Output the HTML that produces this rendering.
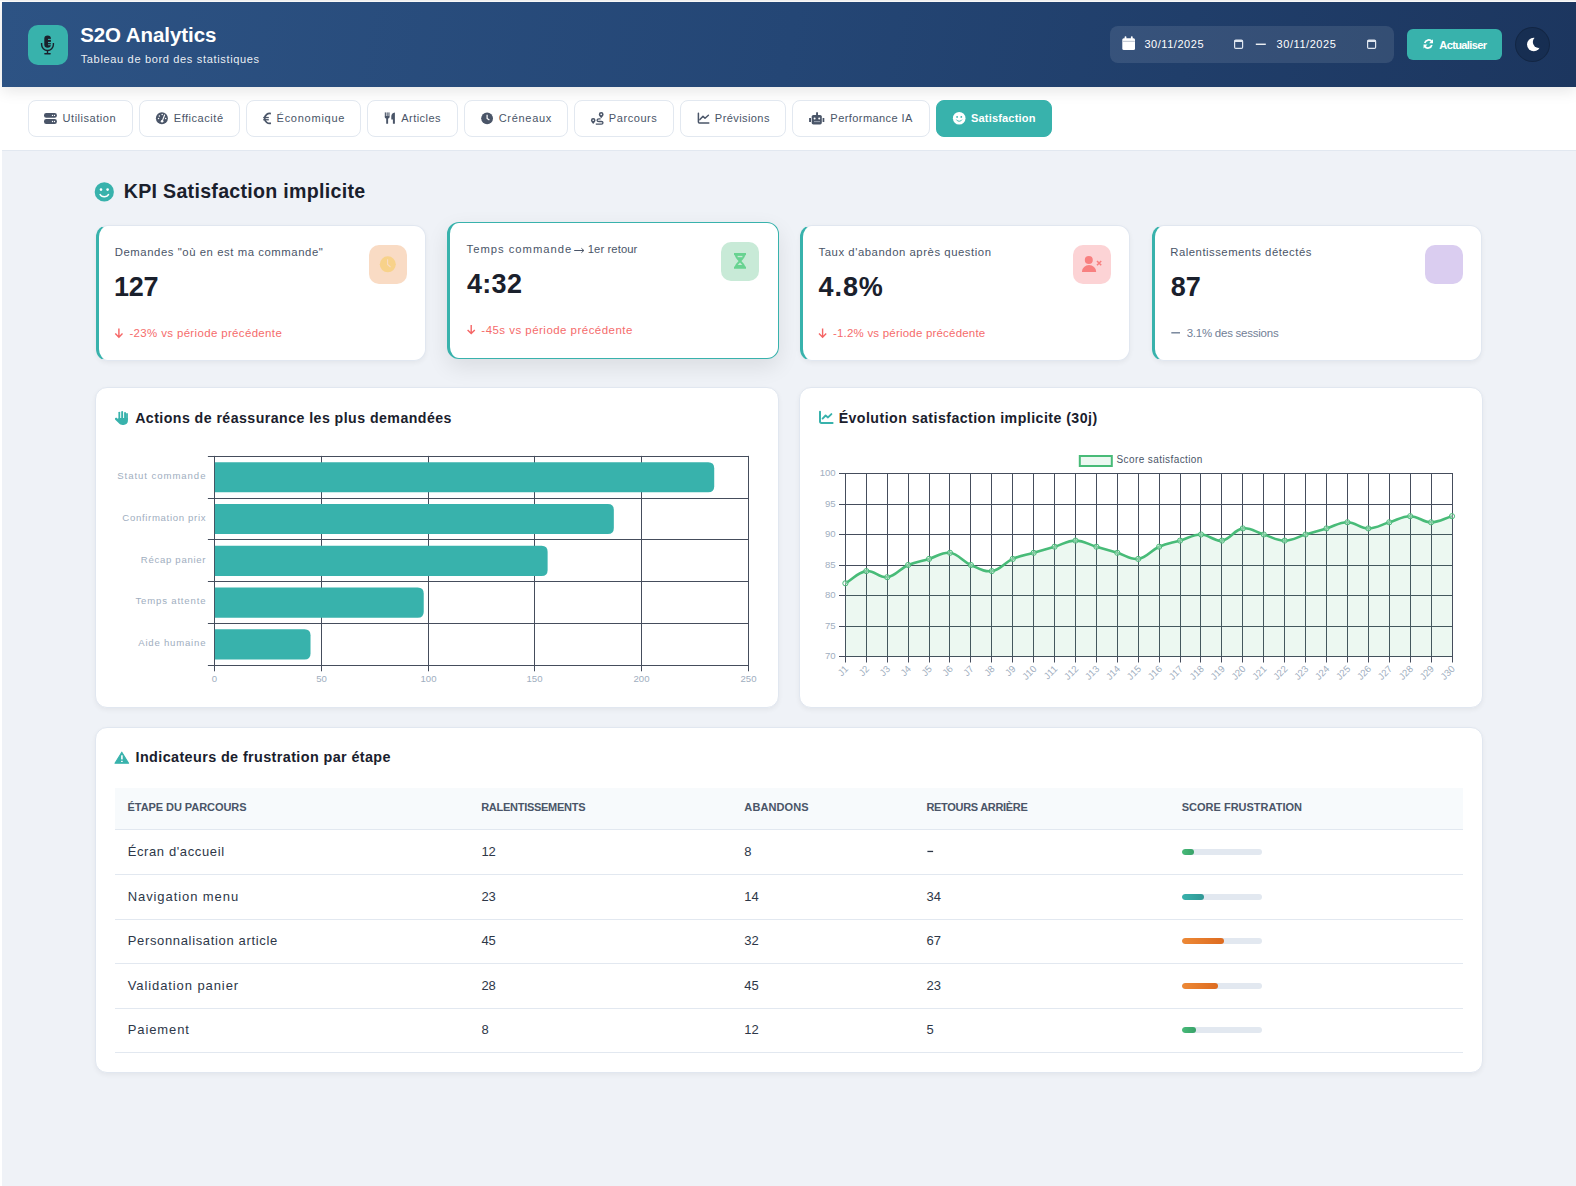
<!DOCTYPE html>
<html lang="fr">
<head>
<meta charset="utf-8">
<title>S2O Analytics - Satisfaction</title>
<style>
html,body{margin:0;padding:0;}
body{width:1576px;height:1186px;position:relative;overflow:hidden;background:#fff;font-family:"Liberation Sans",sans-serif;}
.abs{position:absolute;}
.tx{position:absolute;white-space:pre;}
.topline{position:absolute;left:0;top:0;width:1576px;height:1px;background:#f4f4f4;}
.page{position:absolute;left:2px;top:2px;width:1574px;height:1184px;background:#eff2f7;overflow:hidden;}
.nav{position:absolute;left:2px;top:87px;width:1574px;height:63px;background:#fff;border-bottom:1px solid #e2e8f0;box-sizing:border-box;height:64px;}
.header{position:absolute;left:2px;top:2px;width:1574px;height:85px;background:linear-gradient(100deg,#2d5384 0%,#244675 50%,#1c365f 100%);box-shadow:0 4px 14px rgba(0,0,0,0.10);}
.logo{position:absolute;left:28px;top:25px;width:40px;height:40px;border-radius:10px;background:#38b2ac;}
.datebox{position:absolute;left:1110px;top:26px;width:284px;height:37px;border-radius:8px;background:rgba(255,255,255,0.10);}
.btn{position:absolute;left:1407px;top:29px;width:95px;height:31px;border-radius:6px;background:#38b2ac;}
.moon{position:absolute;left:1515px;top:27px;width:35px;height:35px;border-radius:50%;background:rgba(10,25,50,0.3);box-sizing:border-box;border:1px solid rgba(0,0,0,0.18);}
.tab{position:absolute;top:100px;height:37px;box-sizing:border-box;border:1px solid #e2e8f0;border-radius:8px;background:#fff;}
.tab.act{background:#38b2ac;border-color:#38b2ac;}
.card{position:absolute;background:#fff;border-radius:12px;box-sizing:border-box;border:1px solid #e1e7f0;box-shadow:0 2px 5px rgba(0,0,0,0.05);}
.kpi{border-left:3px solid #38b2ac;}
.kpi.hov{border:1px solid #38b2ac;border-left:3px solid #38b2ac;box-shadow:0 8px 22px rgba(0,0,0,0.09);}
.ibox{position:absolute;width:38px;height:38.6px;border-radius:10px;}
.ax{font-family:"Liberation Sans",sans-serif;font-size:9.6px;fill:#a0aec0;}
.lg{font-family:"Liberation Sans",sans-serif;font-size:10px;fill:#4a5568;}
.thead{position:absolute;left:115px;top:788px;width:1348px;height:41px;background:#f7fafc;}
.rb{position:absolute;left:115px;width:1348px;height:1px;background:#e2e8f0;}
.trk{position:absolute;left:1182px;width:80px;height:6px;border-radius:3px;background:#e2e8f0;overflow:hidden;}
.trk div{height:6px;border-radius:3px;}
svg.ov{position:absolute;left:0;top:0;}
</style>
</head>
<body>
<div class="topline"></div>
<div class="page"></div>
<div class="nav"></div>
<div class="header"></div>
<div class="logo"></div>
<div class="datebox"></div>
<div class="btn"></div>
<div class="moon"></div>

<div class="tab" style="left:28px;width:105px"></div>
<div class="tab" style="left:139px;width:101px"></div>
<div class="tab" style="left:246px;width:115px"></div>
<div class="tab" style="left:367px;width:91px"></div>
<div class="tab" style="left:464px;width:104px"></div>
<div class="tab" style="left:574px;width:100px"></div>
<div class="tab" style="left:680px;width:106px"></div>
<div class="tab" style="left:792px;width:138px"></div>
<div class="tab act" style="left:936px;width:116px"></div>

<!-- KPI cards -->
<div class="card kpi" style="left:96px;top:225px;width:330px;height:136px"></div>
<div class="card kpi hov" style="left:447px;top:222.2px;width:331.8px;height:136.6px"></div>
<div class="card kpi" style="left:800px;top:225px;width:330px;height:136px"></div>
<div class="card kpi" style="left:1152px;top:225px;width:330px;height:136px"></div>
<div class="ibox" style="left:369px;top:245px;background:#f9dbc4"></div>
<div class="ibox" style="left:721px;top:242px;background:#c8ead7"></div>
<div class="ibox" style="left:1073px;top:245px;background:#fcd3d5"></div>
<div class="ibox" style="left:1425px;top:245px;background:#dacdf0"></div>

<!-- chart cards -->
<div class="card" style="left:95px;top:387px;width:684px;height:321px"></div>
<div class="card" style="left:799px;top:387px;width:684px;height:321px"></div>
<!-- table card -->
<div class="card" style="left:95px;top:727px;width:1388px;height:346px"></div>
<div class="thead"></div>
<div class="rb" style="top:829.0px"></div>
<div class="rb" style="top:874.0px"></div>
<div class="rb" style="top:918.6px"></div>
<div class="rb" style="top:963.2px"></div>
<div class="rb" style="top:1007.8px"></div>
<div class="rb" style="top:1052.4px"></div>
<div class="trk" style="top:849.0px"><div style="width:15%;background:linear-gradient(90deg,#48bb78,#38a169)"></div></div>
<div class="trk" style="top:893.6px"><div style="width:28%;background:linear-gradient(90deg,#38b2ac,#319795)"></div></div>
<div class="trk" style="top:938.2px"><div style="width:52%;background:linear-gradient(90deg,#ed8936,#dd6b20)"></div></div>
<div class="trk" style="top:982.8px"><div style="width:45%;background:linear-gradient(90deg,#ed8936,#dd6b20)"></div></div>
<div class="trk" style="top:1027.4px"><div style="width:18%;background:linear-gradient(90deg,#48bb78,#38a169)"></div></div>

<svg class="ov" width="1576" height="1186" viewBox="0 0 1576 1186">
<line x1="839" y1="473.50" x2="1452.50" y2="473.50" stroke="#454d5c" stroke-width="1"/>
<line x1="839" y1="504.50" x2="1452.50" y2="504.50" stroke="#454d5c" stroke-width="1"/>
<line x1="839" y1="534.50" x2="1452.50" y2="534.50" stroke="#454d5c" stroke-width="1"/>
<line x1="839" y1="565.50" x2="1452.50" y2="565.50" stroke="#454d5c" stroke-width="1"/>
<line x1="839" y1="595.50" x2="1452.50" y2="595.50" stroke="#454d5c" stroke-width="1"/>
<line x1="839" y1="626.50" x2="1452.50" y2="626.50" stroke="#454d5c" stroke-width="1"/>
<line x1="839" y1="656.50" x2="1452.50" y2="656.50" stroke="#454d5c" stroke-width="1"/>
<line x1="845.50" y1="473.00" x2="845.50" y2="662.5" stroke="#454d5c" stroke-width="1"/>
<line x1="866.50" y1="473.00" x2="866.50" y2="662.5" stroke="#454d5c" stroke-width="1"/>
<line x1="887.50" y1="473.00" x2="887.50" y2="662.5" stroke="#454d5c" stroke-width="1"/>
<line x1="908.50" y1="473.00" x2="908.50" y2="662.5" stroke="#454d5c" stroke-width="1"/>
<line x1="929.50" y1="473.00" x2="929.50" y2="662.5" stroke="#454d5c" stroke-width="1"/>
<line x1="949.50" y1="473.00" x2="949.50" y2="662.5" stroke="#454d5c" stroke-width="1"/>
<line x1="970.50" y1="473.00" x2="970.50" y2="662.5" stroke="#454d5c" stroke-width="1"/>
<line x1="991.50" y1="473.00" x2="991.50" y2="662.5" stroke="#454d5c" stroke-width="1"/>
<line x1="1012.50" y1="473.00" x2="1012.50" y2="662.5" stroke="#454d5c" stroke-width="1"/>
<line x1="1033.50" y1="473.00" x2="1033.50" y2="662.5" stroke="#454d5c" stroke-width="1"/>
<line x1="1054.50" y1="473.00" x2="1054.50" y2="662.5" stroke="#454d5c" stroke-width="1"/>
<line x1="1075.50" y1="473.00" x2="1075.50" y2="662.5" stroke="#454d5c" stroke-width="1"/>
<line x1="1096.50" y1="473.00" x2="1096.50" y2="662.5" stroke="#454d5c" stroke-width="1"/>
<line x1="1117.50" y1="473.00" x2="1117.50" y2="662.5" stroke="#454d5c" stroke-width="1"/>
<line x1="1138.50" y1="473.00" x2="1138.50" y2="662.5" stroke="#454d5c" stroke-width="1"/>
<line x1="1159.50" y1="473.00" x2="1159.50" y2="662.5" stroke="#454d5c" stroke-width="1"/>
<line x1="1180.50" y1="473.00" x2="1180.50" y2="662.5" stroke="#454d5c" stroke-width="1"/>
<line x1="1200.50" y1="473.00" x2="1200.50" y2="662.5" stroke="#454d5c" stroke-width="1"/>
<line x1="1221.50" y1="473.00" x2="1221.50" y2="662.5" stroke="#454d5c" stroke-width="1"/>
<line x1="1242.50" y1="473.00" x2="1242.50" y2="662.5" stroke="#454d5c" stroke-width="1"/>
<line x1="1263.50" y1="473.00" x2="1263.50" y2="662.5" stroke="#454d5c" stroke-width="1"/>
<line x1="1284.50" y1="473.00" x2="1284.50" y2="662.5" stroke="#454d5c" stroke-width="1"/>
<line x1="1305.50" y1="473.00" x2="1305.50" y2="662.5" stroke="#454d5c" stroke-width="1"/>
<line x1="1326.50" y1="473.00" x2="1326.50" y2="662.5" stroke="#454d5c" stroke-width="1"/>
<line x1="1347.50" y1="473.00" x2="1347.50" y2="662.5" stroke="#454d5c" stroke-width="1"/>
<line x1="1368.50" y1="473.00" x2="1368.50" y2="662.5" stroke="#454d5c" stroke-width="1"/>
<line x1="1389.50" y1="473.00" x2="1389.50" y2="662.5" stroke="#454d5c" stroke-width="1"/>
<line x1="1410.50" y1="473.00" x2="1410.50" y2="662.5" stroke="#454d5c" stroke-width="1"/>
<line x1="1431.50" y1="473.00" x2="1431.50" y2="662.5" stroke="#454d5c" stroke-width="1"/>
<line x1="1452.50" y1="473.00" x2="1452.50" y2="662.5" stroke="#454d5c" stroke-width="1"/>
<path d="M845.40,583.30 C853.77,578.42 857.51,572.38 866.32,571.10 C874.24,569.94 879.31,578.36 887.23,577.20 C896.04,575.92 899.34,568.85 908.15,565.00 C916.08,561.53 920.70,561.34 929.07,558.90 C937.44,556.46 942.06,551.64 949.99,552.80 C958.79,554.08 962.10,561.15 970.90,565.00 C978.83,568.47 983.90,572.26 991.82,571.10 C1000.63,569.82 1003.93,562.75 1012.74,558.90 C1020.66,555.43 1025.29,555.24 1033.66,552.80 C1042.02,550.36 1046.21,549.14 1054.57,546.70 C1062.94,544.26 1067.12,540.60 1075.49,540.60 C1083.86,540.60 1088.04,544.26 1096.41,546.70 C1104.77,549.14 1108.96,550.36 1117.32,552.80 C1125.69,555.24 1130.32,560.06 1138.24,558.90 C1147.05,557.62 1150.35,550.55 1159.16,546.70 C1167.08,543.23 1171.71,543.04 1180.08,540.60 C1188.44,538.16 1192.63,534.50 1200.99,534.50 C1209.36,534.50 1213.98,541.76 1221.91,540.60 C1230.72,539.32 1234.02,529.68 1242.83,528.40 C1250.75,527.24 1255.38,532.06 1263.74,534.50 C1272.11,536.94 1276.30,540.60 1284.66,540.60 C1293.03,540.60 1297.21,536.94 1305.58,534.50 C1313.95,532.06 1318.13,530.84 1326.50,528.40 C1334.86,525.96 1339.05,522.30 1347.41,522.30 C1355.78,522.30 1359.96,528.40 1368.33,528.40 C1376.70,528.40 1380.88,524.74 1389.25,522.30 C1397.62,519.86 1401.80,516.20 1410.17,516.20 C1418.53,516.20 1422.72,522.30 1431.08,522.30 C1439.45,522.30 1443.63,518.64 1452.00,516.20 L1452.00,656.50 L845.40,656.50 Z" fill="rgba(72,187,120,0.1)" stroke="none"/>
<path d="M845.40,583.30 C853.77,578.42 857.51,572.38 866.32,571.10 C874.24,569.94 879.31,578.36 887.23,577.20 C896.04,575.92 899.34,568.85 908.15,565.00 C916.08,561.53 920.70,561.34 929.07,558.90 C937.44,556.46 942.06,551.64 949.99,552.80 C958.79,554.08 962.10,561.15 970.90,565.00 C978.83,568.47 983.90,572.26 991.82,571.10 C1000.63,569.82 1003.93,562.75 1012.74,558.90 C1020.66,555.43 1025.29,555.24 1033.66,552.80 C1042.02,550.36 1046.21,549.14 1054.57,546.70 C1062.94,544.26 1067.12,540.60 1075.49,540.60 C1083.86,540.60 1088.04,544.26 1096.41,546.70 C1104.77,549.14 1108.96,550.36 1117.32,552.80 C1125.69,555.24 1130.32,560.06 1138.24,558.90 C1147.05,557.62 1150.35,550.55 1159.16,546.70 C1167.08,543.23 1171.71,543.04 1180.08,540.60 C1188.44,538.16 1192.63,534.50 1200.99,534.50 C1209.36,534.50 1213.98,541.76 1221.91,540.60 C1230.72,539.32 1234.02,529.68 1242.83,528.40 C1250.75,527.24 1255.38,532.06 1263.74,534.50 C1272.11,536.94 1276.30,540.60 1284.66,540.60 C1293.03,540.60 1297.21,536.94 1305.58,534.50 C1313.95,532.06 1318.13,530.84 1326.50,528.40 C1334.86,525.96 1339.05,522.30 1347.41,522.30 C1355.78,522.30 1359.96,528.40 1368.33,528.40 C1376.70,528.40 1380.88,524.74 1389.25,522.30 C1397.62,519.86 1401.80,516.20 1410.17,516.20 C1418.53,516.20 1422.72,522.30 1431.08,522.30 C1439.45,522.30 1443.63,518.64 1452.00,516.20" fill="none" stroke="#48bb78" stroke-width="2.6" stroke-linejoin="round"/>
<circle cx="845.40" cy="583.30" r="2.6" fill="rgba(255,255,255,0.3)" stroke="#48bb78" stroke-width="1"/>
<circle cx="866.32" cy="571.10" r="2.6" fill="rgba(255,255,255,0.3)" stroke="#48bb78" stroke-width="1"/>
<circle cx="887.23" cy="577.20" r="2.6" fill="rgba(255,255,255,0.3)" stroke="#48bb78" stroke-width="1"/>
<circle cx="908.15" cy="565.00" r="2.6" fill="rgba(255,255,255,0.3)" stroke="#48bb78" stroke-width="1"/>
<circle cx="929.07" cy="558.90" r="2.6" fill="rgba(255,255,255,0.3)" stroke="#48bb78" stroke-width="1"/>
<circle cx="949.99" cy="552.80" r="2.6" fill="rgba(255,255,255,0.3)" stroke="#48bb78" stroke-width="1"/>
<circle cx="970.90" cy="565.00" r="2.6" fill="rgba(255,255,255,0.3)" stroke="#48bb78" stroke-width="1"/>
<circle cx="991.82" cy="571.10" r="2.6" fill="rgba(255,255,255,0.3)" stroke="#48bb78" stroke-width="1"/>
<circle cx="1012.74" cy="558.90" r="2.6" fill="rgba(255,255,255,0.3)" stroke="#48bb78" stroke-width="1"/>
<circle cx="1033.66" cy="552.80" r="2.6" fill="rgba(255,255,255,0.3)" stroke="#48bb78" stroke-width="1"/>
<circle cx="1054.57" cy="546.70" r="2.6" fill="rgba(255,255,255,0.3)" stroke="#48bb78" stroke-width="1"/>
<circle cx="1075.49" cy="540.60" r="2.6" fill="rgba(255,255,255,0.3)" stroke="#48bb78" stroke-width="1"/>
<circle cx="1096.41" cy="546.70" r="2.6" fill="rgba(255,255,255,0.3)" stroke="#48bb78" stroke-width="1"/>
<circle cx="1117.32" cy="552.80" r="2.6" fill="rgba(255,255,255,0.3)" stroke="#48bb78" stroke-width="1"/>
<circle cx="1138.24" cy="558.90" r="2.6" fill="rgba(255,255,255,0.3)" stroke="#48bb78" stroke-width="1"/>
<circle cx="1159.16" cy="546.70" r="2.6" fill="rgba(255,255,255,0.3)" stroke="#48bb78" stroke-width="1"/>
<circle cx="1180.08" cy="540.60" r="2.6" fill="rgba(255,255,255,0.3)" stroke="#48bb78" stroke-width="1"/>
<circle cx="1200.99" cy="534.50" r="2.6" fill="rgba(255,255,255,0.3)" stroke="#48bb78" stroke-width="1"/>
<circle cx="1221.91" cy="540.60" r="2.6" fill="rgba(255,255,255,0.3)" stroke="#48bb78" stroke-width="1"/>
<circle cx="1242.83" cy="528.40" r="2.6" fill="rgba(255,255,255,0.3)" stroke="#48bb78" stroke-width="1"/>
<circle cx="1263.74" cy="534.50" r="2.6" fill="rgba(255,255,255,0.3)" stroke="#48bb78" stroke-width="1"/>
<circle cx="1284.66" cy="540.60" r="2.6" fill="rgba(255,255,255,0.3)" stroke="#48bb78" stroke-width="1"/>
<circle cx="1305.58" cy="534.50" r="2.6" fill="rgba(255,255,255,0.3)" stroke="#48bb78" stroke-width="1"/>
<circle cx="1326.50" cy="528.40" r="2.6" fill="rgba(255,255,255,0.3)" stroke="#48bb78" stroke-width="1"/>
<circle cx="1347.41" cy="522.30" r="2.6" fill="rgba(255,255,255,0.3)" stroke="#48bb78" stroke-width="1"/>
<circle cx="1368.33" cy="528.40" r="2.6" fill="rgba(255,255,255,0.3)" stroke="#48bb78" stroke-width="1"/>
<circle cx="1389.25" cy="522.30" r="2.6" fill="rgba(255,255,255,0.3)" stroke="#48bb78" stroke-width="1"/>
<circle cx="1410.17" cy="516.20" r="2.6" fill="rgba(255,255,255,0.3)" stroke="#48bb78" stroke-width="1"/>
<circle cx="1431.08" cy="522.30" r="2.6" fill="rgba(255,255,255,0.3)" stroke="#48bb78" stroke-width="1"/>
<circle cx="1452.00" cy="516.20" r="2.6" fill="rgba(255,255,255,0.3)" stroke="#48bb78" stroke-width="1"/>
<text x="835.7" y="476.10" text-anchor="end" class="ax">100</text>
<text x="835.7" y="506.60" text-anchor="end" class="ax">95</text>
<text x="835.7" y="537.10" text-anchor="end" class="ax">90</text>
<text x="835.7" y="567.60" text-anchor="end" class="ax">85</text>
<text x="835.7" y="598.10" text-anchor="end" class="ax">80</text>
<text x="835.7" y="628.60" text-anchor="end" class="ax">75</text>
<text x="835.7" y="659.10" text-anchor="end" class="ax">70</text>
<text transform="translate(848.90,669.5) rotate(-45)" text-anchor="end" class="ax">J1</text>
<text transform="translate(869.82,669.5) rotate(-45)" text-anchor="end" class="ax">J2</text>
<text transform="translate(890.73,669.5) rotate(-45)" text-anchor="end" class="ax">J3</text>
<text transform="translate(911.65,669.5) rotate(-45)" text-anchor="end" class="ax">J4</text>
<text transform="translate(932.57,669.5) rotate(-45)" text-anchor="end" class="ax">J5</text>
<text transform="translate(953.49,669.5) rotate(-45)" text-anchor="end" class="ax">J6</text>
<text transform="translate(974.40,669.5) rotate(-45)" text-anchor="end" class="ax">J7</text>
<text transform="translate(995.32,669.5) rotate(-45)" text-anchor="end" class="ax">J8</text>
<text transform="translate(1016.24,669.5) rotate(-45)" text-anchor="end" class="ax">J9</text>
<text transform="translate(1037.16,669.5) rotate(-45)" text-anchor="end" class="ax">J10</text>
<text transform="translate(1058.07,669.5) rotate(-45)" text-anchor="end" class="ax">J11</text>
<text transform="translate(1078.99,669.5) rotate(-45)" text-anchor="end" class="ax">J12</text>
<text transform="translate(1099.91,669.5) rotate(-45)" text-anchor="end" class="ax">J13</text>
<text transform="translate(1120.82,669.5) rotate(-45)" text-anchor="end" class="ax">J14</text>
<text transform="translate(1141.74,669.5) rotate(-45)" text-anchor="end" class="ax">J15</text>
<text transform="translate(1162.66,669.5) rotate(-45)" text-anchor="end" class="ax">J16</text>
<text transform="translate(1183.58,669.5) rotate(-45)" text-anchor="end" class="ax">J17</text>
<text transform="translate(1204.49,669.5) rotate(-45)" text-anchor="end" class="ax">J18</text>
<text transform="translate(1225.41,669.5) rotate(-45)" text-anchor="end" class="ax">J19</text>
<text transform="translate(1246.33,669.5) rotate(-45)" text-anchor="end" class="ax">J20</text>
<text transform="translate(1267.24,669.5) rotate(-45)" text-anchor="end" class="ax">J21</text>
<text transform="translate(1288.16,669.5) rotate(-45)" text-anchor="end" class="ax">J22</text>
<text transform="translate(1309.08,669.5) rotate(-45)" text-anchor="end" class="ax">J23</text>
<text transform="translate(1330.00,669.5) rotate(-45)" text-anchor="end" class="ax">J24</text>
<text transform="translate(1350.91,669.5) rotate(-45)" text-anchor="end" class="ax">J25</text>
<text transform="translate(1371.83,669.5) rotate(-45)" text-anchor="end" class="ax">J26</text>
<text transform="translate(1392.75,669.5) rotate(-45)" text-anchor="end" class="ax">J27</text>
<text transform="translate(1413.67,669.5) rotate(-45)" text-anchor="end" class="ax">J28</text>
<text transform="translate(1434.58,669.5) rotate(-45)" text-anchor="end" class="ax">J29</text>
<text transform="translate(1455.50,669.5) rotate(-45)" text-anchor="end" class="ax">J30</text>
<rect x="1079.8" y="456" width="32" height="10" fill="rgba(72,187,120,0.1)" stroke="#48bb78" stroke-width="2"/>
<line x1="214.50" y1="455.90" x2="214.50" y2="671.30" stroke="#454d5c" stroke-width="1"/>
<text x="214.50" y="682.4" text-anchor="middle" class="ax">0</text>
<line x1="321.50" y1="455.90" x2="321.50" y2="671.30" stroke="#454d5c" stroke-width="1"/>
<text x="321.50" y="682.4" text-anchor="middle" class="ax">50</text>
<line x1="428.50" y1="455.90" x2="428.50" y2="671.30" stroke="#454d5c" stroke-width="1"/>
<text x="428.50" y="682.4" text-anchor="middle" class="ax">100</text>
<line x1="534.50" y1="455.90" x2="534.50" y2="671.30" stroke="#454d5c" stroke-width="1"/>
<text x="534.50" y="682.4" text-anchor="middle" class="ax">150</text>
<line x1="641.50" y1="455.90" x2="641.50" y2="671.30" stroke="#454d5c" stroke-width="1"/>
<text x="641.50" y="682.4" text-anchor="middle" class="ax">200</text>
<line x1="748.50" y1="455.90" x2="748.50" y2="671.30" stroke="#454d5c" stroke-width="1"/>
<text x="748.50" y="682.4" text-anchor="middle" class="ax">250</text>
<line x1="207.9" y1="456.50" x2="748.90" y2="456.50" stroke="#454d5c" stroke-width="1"/>
<line x1="207.9" y1="498.50" x2="748.90" y2="498.50" stroke="#454d5c" stroke-width="1"/>
<line x1="207.9" y1="539.50" x2="748.90" y2="539.50" stroke="#454d5c" stroke-width="1"/>
<line x1="207.9" y1="581.50" x2="748.90" y2="581.50" stroke="#454d5c" stroke-width="1"/>
<line x1="207.9" y1="623.50" x2="748.90" y2="623.50" stroke="#454d5c" stroke-width="1"/>
<line x1="207.9" y1="665.50" x2="748.90" y2="665.50" stroke="#454d5c" stroke-width="1"/>
<path d="M214.90,462.25 H708.22 Q714.22,462.25 714.22,468.25 V486.33 Q714.22,492.33 708.22,492.33 H214.90 Z" fill="#38b2ac"/>
<path d="M214.90,504.03 H607.83 Q613.83,504.03 613.83,510.03 V528.11 Q613.83,534.11 607.83,534.11 H214.90 Z" fill="#38b2ac"/>
<path d="M214.90,545.81 H541.62 Q547.62,545.81 547.62,551.81 V569.89 Q547.62,575.89 541.62,575.89 H214.90 Z" fill="#38b2ac"/>
<path d="M214.90,587.59 H417.73 Q423.73,587.59 423.73,593.59 V611.67 Q423.73,617.67 417.73,617.67 H214.90 Z" fill="#38b2ac"/>
<path d="M214.90,629.37 H304.52 Q310.52,629.37 310.52,635.37 V653.45 Q310.52,659.45 304.52,659.45 H214.90 Z" fill="#38b2ac"/>
<!-- ICONS -->
<g id="icons">
 <!-- microphone -->
 <g fill="#1a202c">
  <rect x="44.3" y="35.4" width="6.6" height="12.3" rx="3.3"/>
  <path d="M41.6,43 v1.6 a5.9,5.9 0 0 0 11.8,0 v-1.6" fill="none" stroke="#1a202c" stroke-width="1.4"/>
  <rect x="46.8" y="50.2" width="1.4" height="3.4"/>
  <rect x="44.2" y="53" width="6.6" height="1.4" rx="0.6"/>
 </g>
 <g fill="#38b2ac"><rect x="48" y="38.9" width="3.2" height="1"/><rect x="48" y="41.9" width="3.2" height="1.2"/><rect x="48" y="44.3" width="3.2" height="0.9"/></g>
 <!-- date calendar icon -->
 <g fill="#fff">
  <rect x="1122.3" y="38.2" width="12.7" height="11.8" rx="1.5"/>
  <rect x="1124.6" y="36.2" width="1.8" height="3" rx="0.8"/>
  <rect x="1130.9" y="36.2" width="1.8" height="3" rx="0.8"/>
 </g>
 <rect x="1122.6" y="40.8" width="12.2" height="1" fill="#b9c0cc"/>
 <!-- small native date icons -->
 <g fill="none" stroke="#dfe6ef" stroke-width="1.2">
  <rect x="1234.6" y="40" width="8" height="8.4" rx="1.2"/>
  <rect x="1367.6" y="40" width="8" height="8.4" rx="1.2"/>
 </g>
 <g fill="#dfe6ef"><rect x="1234.6" y="40" width="8" height="2"/><rect x="1367.6" y="40" width="8" height="2"/></g>
 <rect x="1255.8" y="43.6" width="10" height="1.3" fill="#fff"/>
 <!-- refresh icon -->
 <g transform="translate(1428.3,44) scale(0.86) translate(-1428.3,-44)">
 <g fill="none" stroke="#fff" stroke-width="2">
  <path d="M1424.2,42.8 a4.6,4.6 0 0 1 8.3,-1.4"/>
  <path d="M1432.4,45.2 a4.6,4.6 0 0 1 -8.3,1.4"/>
 </g>
 <path d="M1433.8,38.6 v4.6 h-4.6 z" fill="#fff"/>
 <path d="M1422.8,49.2 v-4.6 h4.6 z" fill="#fff"/>
 </g>
 <!-- moon -->
 <mask id="moonm"><rect x="1510" y="25" width="45" height="40" fill="#fff"/><circle cx="1538.9" cy="42" r="6.1" fill="#000"/></mask>
 <circle cx="1533.75" cy="44.55" r="6.75" fill="#fff" mask="url(#moonm)"/>
 <!-- tab icons (color #4a5568) -->
 <g fill="#4a5568">
  <!-- server -->
  <rect x="44" y="113" width="12.9" height="4.8" rx="2.2"/>
  <rect x="44" y="119.1" width="12.9" height="4.8" rx="2.2"/>
  <!-- tachometer -->
  <circle cx="161.9" cy="118.2" r="6"/>
  <!-- euro -->
  <path d="M270.9,113.6 a5,5 0 0 0 -6.2,4.8 a5,5 0 0 0 6.2,4.8" fill="none" stroke="#4a5568" stroke-width="1.7"/>
  <rect x="263.2" y="116.9" width="5.6" height="1.3"/>
  <rect x="263.2" y="119.1" width="5.6" height="1.3"/>
  <!-- utensils -->
  <rect x="384.8" y="112.4" width="1.1" height="4"/><rect x="386.6" y="112.4" width="1.1" height="4"/><rect x="388.4" y="112.4" width="1.1" height="4"/>
  <path d="M384.8,116 h4.7 v1.4 a2.3,2.3 0 0 1 -1.4,1.2 v5.2 h-1.9 v-5.2 a2.3,2.3 0 0 1 -1.4,-1.2 z"/>
  <path d="M394.9,112.4 v11.4 h-2 v-4.2 h-1.6 v-3.2 a4,4 0 0 1 3.6,-4 z"/>
  <!-- clock -->
  <circle cx="487.1" cy="118.3" r="5.9"/>
  <!-- route -->
  <path d="M593.2,124 c-1.6,-1.8 -2.3,-2.9 -2.3,-3.7 a2.3,2.3 0 0 1 4.6,0 c0,0.8 -0.7,1.9 -2.3,3.7 z"/>
  <path d="M601.2,118.2 c-1.6,-1.8 -2.4,-3 -2.4,-3.8 a2.4,2.4 0 0 1 4.8,0 c0,0.8 -0.8,2 -2.4,3.8 z"/>
  <path d="M600.6,118.9 h-1.6 c-2.6,0 -2.6,2.6 0,2.6 h2.4 c2.1,0 2.1,2.6 0,2.6 h-5.6" fill="none" stroke="#4a5568" stroke-width="1.3"/>
  <!-- chart line -->
  <path d="M698.4,113.2 V122 a1,1 0 0 0 1,1 H708.8" fill="none" stroke="#4a5568" stroke-width="1.5" stroke-linecap="round"/>
  <path d="M699.9,119.6 L703,116.3 L705,118.3 L708.4,115.3" fill="none" stroke="#4a5568" stroke-width="1.5" stroke-linecap="round" stroke-linejoin="round"/>
  <!-- robot -->
  <rect x="811.7" y="114.9" width="10.1" height="9.5" rx="1.6"/>
  <rect x="816.1" y="112.3" width="1.9" height="3"/>
  <rect x="809.1" y="118" width="1.9" height="4"/>
  <rect x="822.6" y="118" width="1.7" height="4"/>
 </g>
 <g fill="#fff">
  <circle cx="814.6" cy="118.4" r="1"/><circle cx="819.2" cy="118.4" r="1"/>
  <rect x="814" y="121.2" width="6" height="0.9" fill="#a3acba"/>
  <!-- server dots -->
  <circle cx="52.5" cy="115.4" r="0.65"/><circle cx="54.5" cy="115.4" r="0.65"/>
  <circle cx="52.5" cy="121.5" r="0.65"/><circle cx="54.5" cy="121.5" r="0.65"/>
  <!-- tach details -->
  <path d="M162.2,121.2 L164.6,115" stroke="#fff" stroke-width="1.1" stroke-linecap="round"/>
  <circle cx="162.1" cy="121.3" r="1.3"/>
  <circle cx="158.5" cy="118.4" r="0.75"/><circle cx="159.4" cy="116" r="0.75"/><circle cx="162.2" cy="114.4" r="0.75"/><circle cx="165.7" cy="118.4" r="0.75"/>
  <circle cx="593.2" cy="120.3" r="0.8"/><circle cx="601.2" cy="114.4" r="0.8"/>
  <!-- clock hands -->
  <path d="M487.1,114.8 v3.7 l2.3,1.6" fill="none" stroke="#fff" stroke-width="1.2"/>
 </g>
 <!-- active smile tab icon -->
 <circle cx="959.2" cy="118.3" r="6.3" fill="#fff"/>
 <g fill="#38b2ac"><circle cx="957.1" cy="116.9" r="0.9"/><circle cx="961.3" cy="116.9" r="0.9"/></g>
 <path d="M956.4,119.6 a3.2,3.2 0 0 0 5.6,0" fill="none" stroke="#38b2ac" stroke-width="0.9"/>
 <!-- section smile -->
 <circle cx="104.3" cy="191.9" r="9.6" fill="#38b2ac"/>
 <g fill="#fff"><circle cx="101" cy="189.6" r="1.3"/><circle cx="107.6" cy="189.6" r="1.3"/></g>
 <path d="M99.8,194 a5,5 0 0 0 9,0" fill="none" stroke="#fff" stroke-width="1.4"/>
 <!-- KPI 1 clock -->
 <circle cx="387.8" cy="264.3" r="8" fill="#f8d28a"/>
 <path d="M387.6,259.2 v5.3 l2.9,2.5" fill="none" stroke="#f9dbc4" stroke-width="1.1"/>
 <!-- KPI 2 hourglass -->
 <path fill="#68d391" d="M734,253 h12 v2.2 h-0.9 c-0.1,2.6 -2.6,4.3 -3.7,5.8 c1.1,1.5 3.6,3.2 3.7,5.6 h0.9 v2.2 h-12 v-2.2 h0.9 c0.1,-2.4 2.6,-4.1 3.7,-5.6 c-1.1,-1.5 -3.6,-3.2 -3.7,-5.8 h-0.9 z"/>
 <rect x="737.6" y="255.9" width="4.8" height="1.3" fill="#c8ead7"/>
 <path d="M737.7,265 L740,262.5 L742.3,265 z" fill="#c8ead7"/>
 <!-- KPI 3 user-times -->
 <g fill="#f88080">
  <circle cx="1088.8" cy="259.9" r="4"/>
  <path d="M1082,271.9 v-0.6 a7,6.2 0 0 1 14.1,0 v0.6 z"/>
 </g>
 <path d="M1097,261 l4.2,4.2 M1101.2,261 l-4.2,4.2" stroke="#f88080" stroke-width="1.6"/>
 <!-- long arrow in k2 label -->
 <path d="M574.2,250.5 H583.5" stroke="#4a5568" stroke-width="1"/>
 <path d="M581.4,248.3 L583.9,250.5 L581.4,252.7" fill="none" stroke="#4a5568" stroke-width="1"/>
 <rect x="927.4" y="850.8" width="5.7" height="1.3" fill="#2d3748"/>
 <!-- change arrows -->
 <g fill="none" stroke="#f56565" stroke-width="1.4">
  <path d="M118.9,328.6 v8.4 M115.3,333.6 l3.6,3.6 l3.6,-3.6"/>
  <path d="M471.2,325 v8.4 M467.6,330 l3.6,3.6 l3.6,-3.6"/>
  <path d="M822.6,328.6 v8.4 M819,333.6 l3.6,3.6 l3.6,-3.6"/>
 </g>
 <rect x="1171.3" y="332.1" width="8.7" height="1.4" fill="#718096"/>
 <!-- hand icon -->
 <g fill="#38b2ac">
  <rect x="118.4" y="411.7" width="1.8" height="8" rx="0.9"/>
  <rect x="121.2" y="411" width="1.9" height="8.5" rx="0.95"/>
  <rect x="124.1" y="411.9" width="1.9" height="8" rx="0.95"/>
  <rect x="126.1" y="413.1" width="1.8" height="7" rx="0.9"/>
  <path d="M118.4,418 H127.9 V421 c0,2.3 -1.8,3.9 -4.4,3.9 h-0.8 c-1.6,0 -2.8,-0.6 -3.8,-1.7 l-3.6,-3.5 c-0.5,-0.6 -0.4,-1.3 0.1,-1.7 c0.6,-0.4 1.3,-0.3 1.8,0.2 l1.1,1.1 z"/>
 </g>
 <!-- chart line icon -->
 <path d="M820,411.8 V421.6 a1.4,1.4 0 0 0 1.4,1.4 H832.6" fill="none" stroke="#38b2ac" stroke-width="2" stroke-linecap="round"/>
 <path d="M822.6,418.6 L825.6,415.5 L828,417.4 L831.4,414.1" fill="none" stroke="#38b2ac" stroke-width="1.9" stroke-linecap="round" stroke-linejoin="round"/>
 <!-- warning icon -->
 <path d="M121.8,752.2 L128.6,763.2 H115 Z" fill="#38b2ac" stroke="#38b2ac" stroke-width="1.1" stroke-linejoin="round"/>
 <rect x="121.1" y="755.3" width="1.6" height="4.1" fill="#fff"/>
 <rect x="121.1" y="760.8" width="1.6" height="1.2" fill="#fff"/>
</g>
</svg>
<div class="tx" style="left:80.13px;top:22.00px;font-size:20.49px;line-height:26px;font-weight:700;color:#fff;letter-spacing:-0.059px;">S2O Analytics</div>
<div class="tx" style="left:80.66px;top:52.00px;font-size:11.05px;line-height:14px;font-weight:500;color:rgba(255,255,255,0.92);letter-spacing:0.646px;">Tableau de bord des statistiques</div>
<div class="tx" style="left:1144.46px;top:37.00px;font-size:10.97px;line-height:14px;font-weight:500;color:#fff;letter-spacing:0.554px;">30/11/2025</div>
<div class="tx" style="left:1276.56px;top:37.00px;font-size:10.97px;line-height:14px;font-weight:500;color:#fff;letter-spacing:0.576px;">30/11/2025</div>
<div class="tx" style="left:1439.36px;top:38.00px;font-size:11.06px;line-height:14px;font-weight:700;color:#fff;letter-spacing:-0.637px;">Actualiser</div>
<div class="tx" style="left:62.56px;top:111.00px;font-size:11.05px;line-height:14px;font-weight:400;color:#4a5568;letter-spacing:0.519px;">Utilisation</div>
<div class="tx" style="left:173.76px;top:111.00px;font-size:11.05px;line-height:14px;font-weight:400;color:#4a5568;letter-spacing:0.518px;">Efficacité</div>
<div class="tx" style="left:276.56px;top:111.00px;font-size:11.05px;line-height:14px;font-weight:400;color:#4a5568;letter-spacing:0.718px;">Économique</div>
<div class="tx" style="left:401.16px;top:111.00px;font-size:11.05px;line-height:14px;font-weight:400;color:#4a5568;letter-spacing:0.466px;">Articles</div>
<div class="tx" style="left:498.66px;top:111.00px;font-size:11.05px;line-height:14px;font-weight:400;color:#4a5568;letter-spacing:0.682px;">Créneaux</div>
<div class="tx" style="left:608.86px;top:111.00px;font-size:11.05px;line-height:14px;font-weight:400;color:#4a5568;letter-spacing:0.538px;">Parcours</div>
<div class="tx" style="left:714.86px;top:111.00px;font-size:11.05px;line-height:14px;font-weight:400;color:#4a5568;letter-spacing:0.402px;">Prévisions</div>
<div class="tx" style="left:830.36px;top:111.00px;font-size:11.05px;line-height:14px;font-weight:400;color:#4a5568;letter-spacing:0.410px;">Performance IA</div>
<div class="tx" style="left:970.96px;top:111.00px;font-size:11.05px;line-height:14px;font-weight:700;color:#fff;letter-spacing:0.169px;">Satisfaction</div>
<div class="tx" style="left:1116.50px;top:453.00px;font-size:10.00px;line-height:13px;font-weight:400;color:#4a5568;letter-spacing:0.410px;">Score satisfaction</div>
<div class="tx" style="left:123.82px;top:179.00px;font-size:19.62px;line-height:25px;font-weight:700;color:#1a202c;letter-spacing:0.280px;">KPI Satisfaction implicite</div>
<div class="tx" style="left:114.75px;top:245.00px;font-size:11.34px;line-height:15px;font-weight:400;color:#4a5568;letter-spacing:0.560px;">Demandes &quot;où en est ma commande&quot;</div>
<div class="tx" style="left:114.12px;top:270.00px;font-size:27.03px;line-height:34px;font-weight:700;color:#1a202c;letter-spacing:-0.350px;">127</div>
<div class="tx" style="left:129.44px;top:326.00px;font-size:11.48px;line-height:15px;font-weight:400;color:#f56b6b;letter-spacing:0.355px;">-23% vs période précédente</div>
<div class="tx" style="left:466.55px;top:242.00px;font-size:11.26px;line-height:15px;font-weight:400;color:#4a5568;letter-spacing:0.991px;">Temps commande</div>
<div class="tx" style="left:587.75px;top:242.00px;font-size:11.26px;line-height:15px;font-weight:400;color:#4a5568;letter-spacing:0.091px;">1er retour</div>
<div class="tx" style="left:466.92px;top:267.00px;font-size:27.03px;line-height:34px;font-weight:700;color:#1a202c;letter-spacing:0.328px;">4:32</div>
<div class="tx" style="left:481.34px;top:323.00px;font-size:11.48px;line-height:15px;font-weight:400;color:#f56b6b;letter-spacing:0.481px;">-45s vs période précédente</div>
<div class="tx" style="left:818.55px;top:245.00px;font-size:11.34px;line-height:15px;font-weight:400;color:#4a5568;letter-spacing:0.546px;">Taux d&#x27;abandon après question</div>
<div class="tx" style="left:818.62px;top:270.00px;font-size:27.03px;line-height:34px;font-weight:700;color:#1a202c;letter-spacing:0.895px;">4.8%</div>
<div class="tx" style="left:832.94px;top:326.00px;font-size:11.48px;line-height:15px;font-weight:400;color:#f56b6b;letter-spacing:0.218px;">-1.2% vs période précédente</div>
<div class="tx" style="left:1170.35px;top:245.00px;font-size:11.34px;line-height:15px;font-weight:400;color:#4a5568;letter-spacing:0.491px;">Ralentissements détectés</div>
<div class="tx" style="left:1170.82px;top:270.00px;font-size:27.03px;line-height:34px;font-weight:700;color:#1a202c;letter-spacing:0.000px;">87</div>
<div class="tx" style="left:1186.64px;top:326.00px;font-size:11.48px;line-height:15px;font-weight:400;color:#718096;letter-spacing:-0.226px;">3.1% des sessions</div>
<div class="tx" style="left:135.13px;top:409.00px;font-size:14.17px;line-height:18px;font-weight:700;color:#1a202c;letter-spacing:0.453px;">Actions de réassurance les plus demandées</div>
<div class="tx" style="left:838.63px;top:409.00px;font-size:14.17px;line-height:18px;font-weight:700;color:#1a202c;letter-spacing:0.460px;">Évolution satisfaction implicite (30j)</div>
<div class="tx" style="left:135.52px;top:748.00px;font-size:14.39px;line-height:18px;font-weight:700;color:#1a202c;letter-spacing:0.394px;">Indicateurs de frustration par étape</div>
<div class="tx" style="left:127.56px;top:800.00px;font-size:11.00px;line-height:14px;font-weight:700;color:#4a5568;letter-spacing:-0.064px;">ÉTAPE DU PARCOURS</div>
<div class="tx" style="left:481.16px;top:800.00px;font-size:11.00px;line-height:14px;font-weight:700;color:#4a5568;letter-spacing:-0.272px;">RALENTISSEMENTS</div>
<div class="tx" style="left:744.36px;top:800.00px;font-size:11.00px;line-height:14px;font-weight:700;color:#4a5568;letter-spacing:0.103px;">ABANDONS</div>
<div class="tx" style="left:926.46px;top:800.00px;font-size:11.00px;line-height:14px;font-weight:700;color:#4a5568;letter-spacing:-0.312px;">RETOURS ARRIÈRE</div>
<div class="tx" style="left:1181.76px;top:800.00px;font-size:11.00px;line-height:14px;font-weight:700;color:#4a5568;letter-spacing:-0.000px;">SCORE FRUSTRATION</div>
<div class="tx" style="left:117.22px;top:470.00px;font-size:9.60px;line-height:12px;font-weight:400;color:#a0aec0;letter-spacing:0.933px;">Statut commande</div>
<div class="tx" style="left:122.32px;top:512.00px;font-size:9.60px;line-height:12px;font-weight:400;color:#a0aec0;letter-spacing:0.666px;">Confirmation prix</div>
<div class="tx" style="left:140.82px;top:554.00px;font-size:9.60px;line-height:12px;font-weight:400;color:#a0aec0;letter-spacing:0.690px;">Récap panier</div>
<div class="tx" style="left:135.42px;top:595.00px;font-size:9.60px;line-height:12px;font-weight:400;color:#a0aec0;letter-spacing:0.817px;">Temps attente</div>
<div class="tx" style="left:138.22px;top:637.00px;font-size:9.60px;line-height:12px;font-weight:400;color:#a0aec0;letter-spacing:0.781px;">Aide humaine</div>
<div class="tx" style="left:127.68px;top:843.00px;font-size:13.00px;line-height:17px;font-weight:400;color:#2d3748;letter-spacing:0.614px;">Écran d&#x27;accueil</div>
<div class="tx" style="left:481.38px;top:843.00px;font-size:13.00px;line-height:17px;font-weight:400;color:#2d3748;letter-spacing:0.000px;">12</div>
<div class="tx" style="left:744.28px;top:843.00px;font-size:13.00px;line-height:17px;font-weight:400;color:#2d3748;letter-spacing:0.000px;">8</div>
<div class="tx" style="left:926.48px;top:843.00px;font-size:13.00px;line-height:17px;font-weight:400;color:#2d3748;letter-spacing:0.000px;"></div>
<div class="tx" style="left:127.68px;top:888.00px;font-size:13.00px;line-height:17px;font-weight:400;color:#2d3748;letter-spacing:0.920px;">Navigation menu</div>
<div class="tx" style="left:481.38px;top:888.00px;font-size:13.00px;line-height:17px;font-weight:400;color:#2d3748;letter-spacing:0.000px;">23</div>
<div class="tx" style="left:744.28px;top:888.00px;font-size:13.00px;line-height:17px;font-weight:400;color:#2d3748;letter-spacing:0.000px;">14</div>
<div class="tx" style="left:926.48px;top:888.00px;font-size:13.00px;line-height:17px;font-weight:400;color:#2d3748;letter-spacing:0.000px;">34</div>
<div class="tx" style="left:127.68px;top:932.00px;font-size:13.00px;line-height:17px;font-weight:400;color:#2d3748;letter-spacing:0.658px;">Personnalisation article</div>
<div class="tx" style="left:481.38px;top:932.00px;font-size:13.00px;line-height:17px;font-weight:400;color:#2d3748;letter-spacing:0.000px;">45</div>
<div class="tx" style="left:744.28px;top:932.00px;font-size:13.00px;line-height:17px;font-weight:400;color:#2d3748;letter-spacing:0.000px;">32</div>
<div class="tx" style="left:926.48px;top:932.00px;font-size:13.00px;line-height:17px;font-weight:400;color:#2d3748;letter-spacing:0.000px;">67</div>
<div class="tx" style="left:127.68px;top:977.00px;font-size:13.00px;line-height:17px;font-weight:400;color:#2d3748;letter-spacing:0.909px;">Validation panier</div>
<div class="tx" style="left:481.38px;top:977.00px;font-size:13.00px;line-height:17px;font-weight:400;color:#2d3748;letter-spacing:0.000px;">28</div>
<div class="tx" style="left:744.28px;top:977.00px;font-size:13.00px;line-height:17px;font-weight:400;color:#2d3748;letter-spacing:0.000px;">45</div>
<div class="tx" style="left:926.48px;top:977.00px;font-size:13.00px;line-height:17px;font-weight:400;color:#2d3748;letter-spacing:0.000px;">23</div>
<div class="tx" style="left:127.68px;top:1021.00px;font-size:13.00px;line-height:17px;font-weight:400;color:#2d3748;letter-spacing:0.903px;">Paiement</div>
<div class="tx" style="left:481.38px;top:1021.00px;font-size:13.00px;line-height:17px;font-weight:400;color:#2d3748;letter-spacing:0.000px;">8</div>
<div class="tx" style="left:744.28px;top:1021.00px;font-size:13.00px;line-height:17px;font-weight:400;color:#2d3748;letter-spacing:0.000px;">12</div>
<div class="tx" style="left:926.48px;top:1021.00px;font-size:13.00px;line-height:17px;font-weight:400;color:#2d3748;letter-spacing:0.000px;">5</div>
</body>
</html>
